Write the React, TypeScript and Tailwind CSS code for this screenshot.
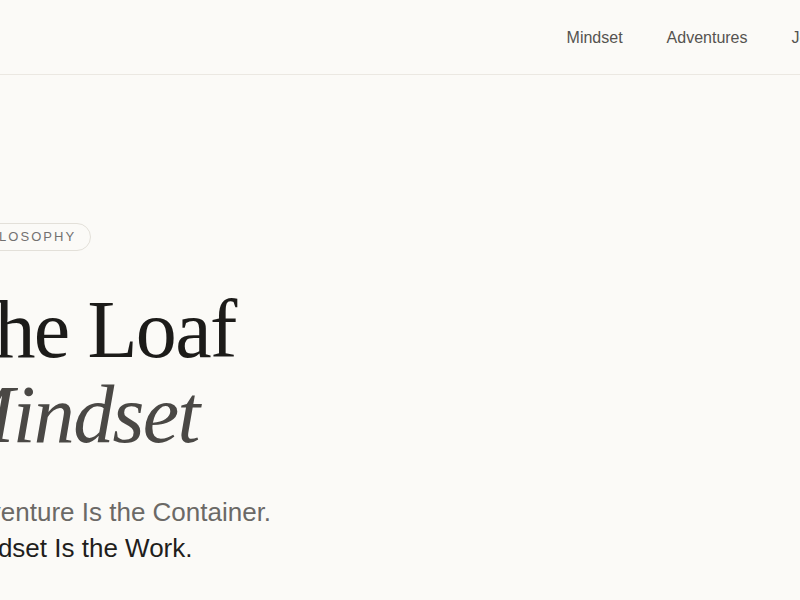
const links = ["Mindset", "Adventures", "Journal"];

export default function App() {
	return (
		<div className="min-h-screen overflow-hidden bg-[#fbfaf7] font-['Liberation_Sans',Arial,sans-serif]">
			{/* Nav */}
			<header className="border-b border-[#ebe8e2]">
				<div className="flex justify-center">
					<nav className="w-[1088px] shrink-0 px-[100px] h-[74px] flex items-center justify-end gap-[44px]">
						{links.map((l) => (
							<a key={l} href="#" className="pt-px text-[16px] text-[#555350]">
								{l}
							</a>
						))}
					</nav>
				</div>
			</header>

			{/* Hero */}
			<main className="flex justify-center">
				<section className="w-[1088px] shrink-0 px-[100px] pt-[148px] pb-24">
					<span className="inline-flex items-center h-[28px] px-[14px] rounded-full border border-[#e3e0d9] text-[13px] tracking-[0.16em] text-[#737170]">
						PHILOSOPHY
					</span>
					<h1 className="mt-9 -ml-[10px] font-['Liberation_Serif','Times_New_Roman',serif] text-[82px] leading-[85px] tracking-[-0.02em] text-[#1c1b19]">
						The Loaf
						<br />
						<em className="italic text-[#4a4845]">Mindset</em>
					</h1>
					<p className="mt-[37px] text-[26px] leading-[36px]">
						<span className="block text-[#6b6966]">Adventure Is the Container.</span>
						<span className="block text-[#1f1e1c]">Mindset Is the Work.</span>
					</p>
				</section>
			</main>
		</div>
	);
}
